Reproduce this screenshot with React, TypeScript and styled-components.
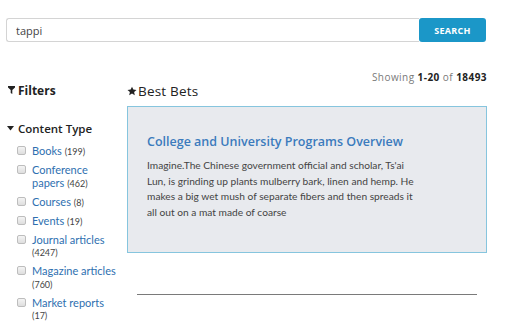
import React from "react";
import styled, { createGlobalStyle } from "styled-components";

const Global = createGlobalStyle`
  html, body { margin: 0; padding: 0; background: #fff; }
  body { font-family: "Open Sans", sans-serif; color: #333; }
  * { box-sizing: border-box; }
`;

const Page = styled.div`
  width: 512px;
  height: 323px;
  overflow: hidden;
  padding: 18px 26px 0 6px;
`;

const SearchRow = styled.form`
  display: flex;
  height: 24px;
`;

const SearchInput = styled.input`
  flex: 1;
  height: 24px;
  border: 1px solid #d4d4d4;
  border-right: none;
  border-radius: 3px 0 0 3px;
  padding: 0 9px;
  font-family: "Open Sans", sans-serif;
  font-size: 11px;
  color: #444;
  outline: none;
`;

const SearchButton = styled.button`
  width: 67px;
  height: 24px;
  border: none;
  border-radius: 3px;
  background: #1b97c8;
  color: #fff;
  font-family: "Open Sans", sans-serif;
  font-weight: 700;
  font-size: 9px;
  letter-spacing: 0.3px;
  padding: 0;
`;

const Columns = styled.div`
  display: grid;
  grid-template-columns: 121px 360px;
`;

const Sidebar = styled.aside`
  padding-top: 40px;
`;

const SideHeading = styled.div`
  display: flex;
  align-items: center;
  gap: 3px;
  height: 16px;
  padding-left: 2px;
  font-size: 12px;
  font-weight: 700;
  color: #222;
`;

const GroupHeading = styled.div`
  display: flex;
  align-items: center;
  gap: 4px;
  margin-top: 22px;
  height: 16px;
  padding-left: 1px;
  font-size: 11.5px;
  font-weight: 600;
  color: #222;
`;

const FacetList = styled.ul`
  list-style: none;
  margin: 9px 0 0;
  padding: 0 0 0 11px;
  display: flex;
  flex-direction: column;
  gap: 6.5px;
`;

const FacetItem = styled.li`
  display: flex;
  align-items: flex-start;
  gap: 6px;
`;

const Box = styled.span`
  flex: none;
  width: 9px;
  height: 9px;
  margin-top: 1px;
  border: 1px solid #bdbdbd;
  border-radius: 2px;
  background: linear-gradient(#f4f4f4, #dedede);
`;

const FacetLabel = styled.span`
  font-family: "Lato", sans-serif;
  font-size: 11px;
  line-height: 12.5px;
  color: #2e6fb0;
  width: 86px;
`;

const Count = styled.span`
  display: inline-block;
  white-space: nowrap;
  font-size: 9px;
  line-height: 10px;
  color: #444;
`;

const Main = styled.main`
  padding-top: 28px;
`;

const Showing = styled.div`
  text-align: right;
  font-size: 10px;
  letter-spacing: 0.45px;
  line-height: 14px;
  color: #7a7a7a;
  b {
    color: #222;
    font-weight: 700;
  }
`;

const MainHeading = styled.h2`
  display: flex;
  align-items: center;
  gap: 1px;
  margin: 0;
  height: 14px;
  font-size: 13.5px;
  letter-spacing: 0.2px;
  font-weight: 500;
  color: #222;
`;

const Card = styled.section`
  margin-top: 8px;
  height: 147px;
  border: 1px solid #86c5de;
  background: #e8eaee;
  padding: 27px 20px 0 19px;
`;

const CardTitle = styled.h3`
  margin: 0;
  font-size: 12.5px;
  font-weight: 600;
  color: #3b7bbd;
  line-height: 16px;
`;

const CardText = styled.p`
  margin: 8px 0 0;
  width: 272px;
  font-family: "Lato", sans-serif;
  font-size: 10.2px;
  line-height: 15.7px;
  color: #444;
`;

const Rule = styled.hr`
  margin: 41px 10px 0;
  border: none;
  border-top: 1px solid #7a7a7a;
`;

const Funnel = () => (
  <svg width="7" height="8" viewBox="0 0 7 8">
    <path d="M0 0H7V1.6L4.3 4V8L2.7 7V4L0 1.6Z" fill="#222" />
  </svg>
);

const Caret = () => (
  <svg width="7" height="5" viewBox="0 0 7 5">
    <path d="M0 0H7L3.5 4.5Z" fill="#222" />
  </svg>
);

const Star = () => (
  <svg width="10" height="10" viewBox="0 0 24 24">
    <path
      d="M12 1.5l3.2 7 7.6.8-5.7 5.1 1.6 7.5L12 18l-6.7 3.9 1.6-7.5L1.2 9.3l7.6-.8z"
      fill="#222"
    />
  </svg>
);

const facets = [
  { label: "Books", count: 199 },
  { label: "Conference papers", count: 462 },
  { label: "Courses", count: 8 },
  { label: "Events", count: 19 },
  { label: "Journal articles", count: 4247 },
  { label: "Magazine articles", count: 760 },
  { label: "Market reports", count: 17 },
];

export default function App() {
  return (
    <Page>
      <Global />
      <SearchRow onSubmit={(e) => e.preventDefault()}>
        <SearchInput defaultValue="tappi" />
        <SearchButton type="submit">SEARCH</SearchButton>
      </SearchRow>
      <Columns>
        <Sidebar>
          <SideHeading>
            <Funnel />
            Filters
          </SideHeading>
          <GroupHeading>
            <Caret />
            Content Type
          </GroupHeading>
          <FacetList>
            {facets.map((f) => (
              <FacetItem key={f.label}>
                <Box />
                <FacetLabel>
                  {f.label} <Count>({f.count})</Count>
                </FacetLabel>
              </FacetItem>
            ))}
          </FacetList>
        </Sidebar>
        <Main>
          <Showing>
            Showing <b>1-20</b> of <b>18493</b>
          </Showing>
          <MainHeading>
            <Star />
            Best Bets
          </MainHeading>
          <Card>
            <CardTitle>College and University Programs Overview</CardTitle>
            <CardText>
              Imagine.The Chinese government official and scholar, Ts'ai Lun, is
              grinding up plants mulberry bark, linen and hemp. He makes a big wet
              mush of separate fibers and then spreads it all out on a mat made of
              coarse
            </CardText>
          </Card>
          <Rule />
        </Main>
      </Columns>
    </Page>
  );
}
